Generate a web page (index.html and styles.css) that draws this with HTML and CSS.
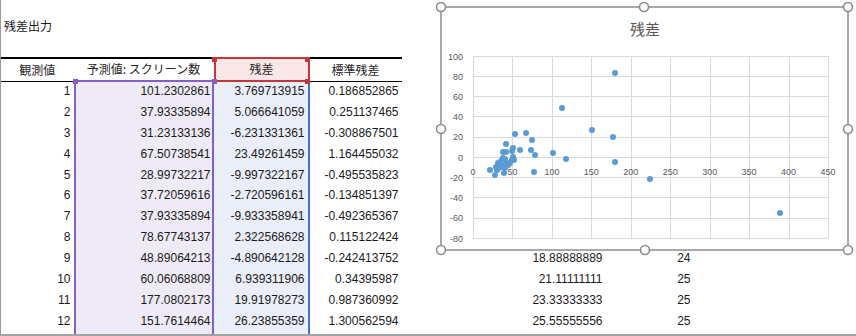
FILE: index.html
```html
<!DOCTYPE html>
<html lang="ja">
<head>
<meta charset="utf-8">
<title>残差出力</title>
<link rel="stylesheet" href="styles.css">
</head>
<body>
<div class="sheet">
  <div class="title">残差出力</div>
  <div class="row hdr">
    <div class="cell c1">観測値</div>
    <div class="cell c2">予測値: スクリーン数<span class="h hp-bl"></span></div>
    <div class="cell c3">残差<span class="h hr-tl"></span><span class="h hr-tr"></span><span class="h hr-br"></span><span class="h hp-bl3"></span></div>
    <div class="cell c4">標準残差</div>
    <div class="cell"></div><div class="cell"></div><div class="cell"></div>
  </div>
  <div class="row"><div class="cell c1">1</div><div class="cell c2">101.2302861</div><div class="cell c3">3.769713915</div><div class="cell c4">0.186852865</div><div class="cell"></div><div class="cell"></div><div class="cell"></div></div>
  <div class="row"><div class="cell c1">2</div><div class="cell c2">37.93335894</div><div class="cell c3">5.066641059</div><div class="cell c4">0.251137465</div><div class="cell"></div><div class="cell"></div><div class="cell"></div></div>
  <div class="row"><div class="cell c1">3</div><div class="cell c2">31.23133136</div><div class="cell c3">-6.231331361</div><div class="cell c4">-0.308867501</div><div class="cell"></div><div class="cell"></div><div class="cell"></div></div>
  <div class="row"><div class="cell c1">4</div><div class="cell c2">67.50738541</div><div class="cell c3">23.49261459</div><div class="cell c4">1.164455032</div><div class="cell"></div><div class="cell"></div><div class="cell"></div></div>
  <div class="row"><div class="cell c1">5</div><div class="cell c2">28.99732217</div><div class="cell c3">-9.997322167</div><div class="cell c4">-0.495535823</div><div class="cell"></div><div class="cell"></div><div class="cell"></div></div>
  <div class="row"><div class="cell c1">6</div><div class="cell c2">37.72059616</div><div class="cell c3">-2.720596161</div><div class="cell c4">-0.134851397</div><div class="cell"></div><div class="cell"></div><div class="cell"></div></div>
  <div class="row"><div class="cell c1">7</div><div class="cell c2">37.93335894</div><div class="cell c3">-9.933358941</div><div class="cell c4">-0.492365367</div><div class="cell"></div><div class="cell"></div><div class="cell"></div></div>
  <div class="row"><div class="cell c1">8</div><div class="cell c2">78.67743137</div><div class="cell c3">2.322568628</div><div class="cell c4">0.115122424</div><div class="cell"></div><div class="cell"></div><div class="cell"></div></div>
  <div class="row"><div class="cell c1">9</div><div class="cell c2">48.89064213</div><div class="cell c3">-4.890642128</div><div class="cell c4">-0.242413752</div><div class="cell"></div><div class="cell">18.88888889</div><div class="cell">24</div></div>
  <div class="row"><div class="cell c1">10</div><div class="cell c2">60.06068809</div><div class="cell c3">6.939311906</div><div class="cell c4">0.34395987</div><div class="cell"></div><div class="cell">21.11111111</div><div class="cell">25</div></div>
  <div class="row"><div class="cell c1">11</div><div class="cell c2">177.0802173</div><div class="cell c3">19.91978273</div><div class="cell c4">0.987360992</div><div class="cell"></div><div class="cell">23.33333333</div><div class="cell">25</div></div>
  <div class="row"><div class="cell c1">12</div><div class="cell c2">151.7614464</div><div class="cell c3">26.23855359</div><div class="cell c4">1.300562594</div><div class="cell"></div><div class="cell">25.55555556</div><div class="cell">25</div></div>
  <div class="row fill"><div class="cell c1"></div><div class="cell c2"></div><div class="cell c3"></div><div class="cell c4"></div><div class="cell"></div><div class="cell"></div><div class="cell"></div></div>

  <svg class="chart" viewBox="436 2 418 254" width="418" height="254" xmlns="http://www.w3.org/2000/svg">
    <rect x="441" y="7" width="407" height="243" fill="#fff" stroke="#8c8c8c" stroke-width="1.5"/>
    <text x="645" y="35" text-anchor="middle" class="ctitle">残差</text>
    <g stroke="#d9d9d9" stroke-width="1" fill="none">
      <path d="M473 56.5H828M473 76.5H828M473 96.5H828M473 116.5H828M473 137.5H828M473 157.5H828M473 177.5H828M473 197.5H828M473 218.5H828M473 238.5H828"/>
      <path d="M473.5 56V238M512.5 56V238M552.5 56V238M591.5 56V238M631.5 56V238M670.5 56V238M710.5 56V238M749.5 56V238M789.5 56V238M828.5 56V238"/>
    </g>
    <g class="ax" text-anchor="end">
      <text x="463" y="59.5">100</text>
      <text x="463" y="79.7">80</text>
      <text x="463" y="99.9">60</text>
      <text x="463" y="120.2">40</text>
      <text x="463" y="140.4">20</text>
      <text x="463" y="160.6">0</text>
      <text x="463" y="180.8">-20</text>
      <text x="463" y="201.1">-40</text>
      <text x="463" y="221.3">-60</text>
      <text x="463" y="241.5">-80</text>
    </g>
    <g class="ax" text-anchor="middle">
      <text x="473" y="174.5">0</text>
      <text x="512.4" y="174.5">50</text>
      <text x="551.9" y="174.5">100</text>
      <text x="591.3" y="174.5">150</text>
      <text x="630.8" y="174.5">200</text>
      <text x="670.2" y="174.5">250</text>
      <text x="709.7" y="174.5">300</text>
      <text x="749.1" y="174.5">350</text>
      <text x="788.6" y="174.5">400</text>
      <text x="828" y="174.5">450</text>
    </g>
    <g fill="#5b9bd5">
      <circle cx="615" cy="73" r="3"/>
      <circle cx="562" cy="108" r="3"/>
      <circle cx="592" cy="130" r="3"/>
      <circle cx="613" cy="137" r="3"/>
      <circle cx="615" cy="162" r="3"/>
      <circle cx="566" cy="159" r="3"/>
      <circle cx="553" cy="153" r="3"/>
      <circle cx="535" cy="155" r="3"/>
      <circle cx="534" cy="172" r="3"/>
      <circle cx="531" cy="150" r="3"/>
      <circle cx="532" cy="140" r="3"/>
      <circle cx="526" cy="133" r="3"/>
      <circle cx="515" cy="134" r="3"/>
      <circle cx="520" cy="150" r="3"/>
      <circle cx="506" cy="144" r="3"/>
      <circle cx="513" cy="148" r="3"/>
      <circle cx="512" cy="151" r="3"/>
      <circle cx="503" cy="152" r="3"/>
      <circle cx="506" cy="152" r="3"/>
      <circle cx="650" cy="179" r="3"/>
      <circle cx="780" cy="213" r="3"/>
      <circle cx="490" cy="170" r="3"/>
      <circle cx="495" cy="175" r="3"/>
      <circle cx="496" cy="167" r="3"/>
      <circle cx="498" cy="163" r="3"/>
      <circle cx="500" cy="162" r="3"/>
      <circle cx="502" cy="160" r="3"/>
      <circle cx="503" cy="158" r="3"/>
      <circle cx="505" cy="159" r="3"/>
      <circle cx="502" cy="165" r="3"/>
      <circle cx="505" cy="168" r="3"/>
      <circle cx="504" cy="173" r="3"/>
      <circle cx="508" cy="165" r="3"/>
      <circle cx="510" cy="163" r="3"/>
      <circle cx="512" cy="160" r="3"/>
      <circle cx="513" cy="157" r="3"/>
      <circle cx="514" cy="160" r="3"/>
      <circle cx="497" cy="170" r="3"/>
      <circle cx="499" cy="168" r="3"/>
      <circle cx="501" cy="167" r="3"/>
      <circle cx="507" cy="163" r="3"/>
    </g>
    <g fill="#fff" stroke="#8c8c8c" stroke-width="1.6">
      <circle cx="441" cy="7" r="4.5"/>
      <circle cx="644" cy="7" r="4.5"/>
      <circle cx="848" cy="7" r="4.5"/>
      <circle cx="441" cy="129" r="4.5"/>
      <circle cx="848" cy="129" r="4.5"/>
      <circle cx="441" cy="250" r="4.5"/>
      <circle cx="645" cy="250" r="4.5"/>
      <circle cx="848" cy="250" r="4.5"/>
    </g>
  </svg>
</div>
</body>
</html>
```
FILE: styles.css
```css
html, body {
  margin: 0;
  padding: 0;
  background: #fff;
}
body {
  font-family: "Liberation Sans", "Noto Sans CJK JP", sans-serif;
  font-size: 12px;
  color: #1a1a1a;
}
.sheet {
  position: relative;
  width: 856px;
  height: 336px;
  box-sizing: border-box;
  border-left: 1.5px solid #9a9a9a;
  border-bottom: 2px solid #a3a3a3;
  display: flex;
  flex-direction: column;
  overflow: hidden;
}
.title {
  height: 57px;
  box-sizing: border-box;
  padding: 18px 0 0 3px;
  line-height: 16px;
  font-family: "Noto Sans CJK JP", sans-serif;
  flex: none;
}
.row {
  display: grid;
  grid-template-columns: 72.5px 140px 96px 92px 108px 96px 88px 1fr;
  height: 20.9px;
  flex: none;
}
.row.fill {
  flex: 1;
  height: auto;
}
.cell {
  box-sizing: border-box;
  text-align: right;
  padding-right: 3px;
  line-height: 20.9px;
  white-space: nowrap;
  overflow: hidden;
}
.row .c2 {
  background: #eeeaf6;
  border-left: 2px solid #8560c4;
  border-right: 2px solid #8560c4;
  padding-right: 1px;
}
.row .c3 {
  background: #e9eef8;
  border-right: 2px solid #4472c4;
}
.row.hdr {
  height: 24px;
}
.hdr .cell {
  position: relative;
  overflow: visible;
  display: flex;
  align-items: center;
  justify-content: center;
  padding: 0;
  font-family: "Noto Sans CJK JP", sans-serif;
  color: #262626;
  background: none;
}
.hdr .c1,
.hdr .c4 {
  border-top: 2px solid #000;
  border-bottom: 1px solid #000;
}
.hdr .c2 {
  border: none;
  border-top: 2px solid #000;
  border-bottom: 2px solid #8560c4;
  background: #fff;
}
.hdr .c3 {
  border: 2px solid #c4353c;
  background: #f9e7e7;
}
.h {
  position: absolute;
  width: 5px;
  height: 5px;
  z-index: 2;
}
.hr-tl { left: -4px; top: -2px; background: #c4353c; }
.hr-tr { right: -2px; top: -2px; background: #c4353c; }
.hr-br { right: -2px; bottom: -4px; background: #c4353c; }
.hp-bl3 { left: -4px; bottom: -4px; background: #8560c4; z-index: 3; }
.hp-bl { left: -1px; bottom: -4px; background: #8560c4; }
.chart {
  position: absolute;
  left: 434.5px;
  top: 2px;
  z-index: 5;
}
.ctitle {
  font-family: "Noto Sans CJK JP", sans-serif;
  font-size: 15px;
  fill: #595959;
}
.ax {
  font-family: "Liberation Sans", sans-serif;
  font-size: 9px;
  fill: #595959;
}
```
